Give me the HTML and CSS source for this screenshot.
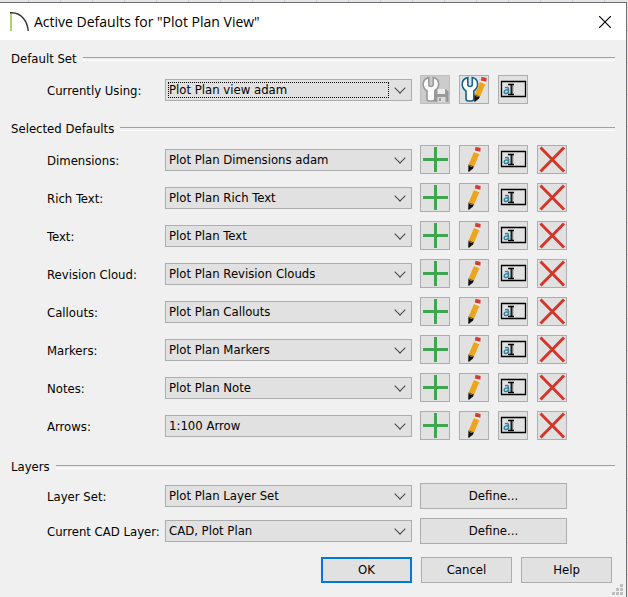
FILE: index.html
```html
<!DOCTYPE html>
<html lang="en">
<head>
<meta charset="utf-8">
<title>Active Defaults for "Plot Plan View"</title>
<link rel="stylesheet" href="styles.css">
</head>
<body>
<svg class="sprite" aria-hidden="true">
  <symbol id="plus" viewBox="0 0 28 27">
    <path d="M14.5 1v25M2 13.5h25" fill="none" stroke="#3fa650" stroke-width="3"/>
  </symbol>
  <symbol id="pencil" viewBox="0 0 28 27">
    <path d="M14 6 19.400 8 14 20.800 8.500 18.800z" fill="#eba51f"/>
    <path d="M14 5.800 14.800 4 20 5.800 19.400 8z" fill="#f4ece0"/>
    <path d="M14.800 4.400 15.600 .8 20.700 2 20.300 5.800z" fill="#d93a31"/>
    <path d="M8.500 18.400 13.800 20.500 13 22.500 8.800 26 8.200 25z" fill="#111"/>
    <path d="M9.200 18.800 10.400 20.300 12.600 20.200" fill="none" stroke="#a08a5a" stroke-width="1"/>
  </symbol>
  <symbol id="rename" viewBox="0 0 28 27">
    <path d="M2.500 5.500h24v15h-24z" fill="none" stroke="#000" stroke-width="1.300"/>
    <path d="M6 11.800q3.500-1.300 3.500 1.600v4.200M9.400 13.800q-4.200 0-4.200 2.200 0 1.600 2 1.600 2.200-.4 2.200-2.400" fill="none" stroke="#32819f" stroke-width="1.500"/>
    <path d="M13.500 9v9" stroke="#777" stroke-width="1.500"/>
    <path d="M9 8.500h6M9 18.500h6M12.200 8.500v10" fill="none" stroke="#000" stroke-width="1.300"/>
  </symbol>
  <symbol id="delete" viewBox="0 0 28 27">
    <path d="M2.500 1.500 26 25.500M26 1.500 2.500 25.500" fill="none" stroke="#d43528" stroke-width="2.900"/>
  </symbol>
  <symbol id="wrench" viewBox="0 0 28 27">
    <path d="M7.800 1.600V8.500Q7.800 10.500 10 10.500T12.300 8.500V1.600Q17.600 3 17.600 8 17.600 12.500 13.800 15V22.500Q13.800 25 11.500 25H8.300Q6 25 6 22.500V15Q2.200 12.500 2.200 8 2.200 3 7.800 1.600z" fill="#fff" stroke="currentColor" stroke-width="1.600"/>
  </symbol>
</svg>

<main class="dialog">
  <header class="titlebar">
    <svg class="logo" viewBox="0 0 20 20" aria-hidden="true">
      <path d="M1 1v18" fill="none" stroke="#b2d26b" stroke-width="2"/>
      <path d="M0 .8Q8.500 0 13.500 6.500 17.700 11.500 18.200 19" fill="none" stroke="#333" stroke-width="1.400"/>
    </svg>
    <h1 class="title">Active Defaults for "Plot Plan View"</h1>
    <button class="close" type="button" aria-label="Close">
      <svg viewBox="0 0 12 12" aria-hidden="true"><path d="M0 0 12 12M12 0 0 12" stroke="#000" stroke-width="1.200"/></svg>
    </button>
  </header>

  <form class="content">
    <fieldset class="group">
      <legend class="heading"><span>Default Set</span></legend>
      <div class="row">
        <label for="using">Currently Using:</label>
        <span class="combo focused"><select id="using"><option>Plot Plan view adam</option></select></span>
        <span class="actions">
          <button type="button" class="icon" disabled aria-label="Save default set">
            <svg viewBox="0 0 28 27"><use href="#wrench"/><path d="M13.500 13h11l3 2.500V26h-14z" fill="#999"/><path d="M16.500 13h7.500v5h-7.500z" fill="#eee"/><path d="M16.500 21h8v5h-8z" fill="#ddd"/><path d="M18 22h2v3h-2z" fill="#999"/></svg>
          </button>
          <button type="button" class="icon" aria-label="Edit default set">
            <svg viewBox="0 0 28 27"><use href="#wrench"/><use href="#pencil" x="6" width="28" height="27"/></svg>
          </button>
          <button type="button" class="icon" aria-label="Rename default set"><svg><use href="#rename"/></svg></button>
        </span>
      </div>
    </fieldset>

    <fieldset class="group defaults">
      <legend class="heading"><span>Selected Defaults</span></legend>
      <div class="row">
        <label for="dimensions">Dimensions:</label>
        <span class="combo"><select id="dimensions"><option>Plot Plan Dimensions adam</option></select></span>
        <span class="actions">
          <button type="button" class="icon" aria-label="Add"><svg><use href="#plus"/></svg></button>
          <button type="button" class="icon" aria-label="Edit"><svg><use href="#pencil"/></svg></button>
          <button type="button" class="icon" aria-label="Rename"><svg><use href="#rename"/></svg></button>
          <button type="button" class="icon" aria-label="Delete"><svg><use href="#delete"/></svg></button>
        </span>
      </div>
      <div class="row">
        <label for="richtext">Rich Text:</label>
        <span class="combo"><select id="richtext"><option>Plot Plan Rich Text</option></select></span>
        <span class="actions">
          <button type="button" class="icon" aria-label="Add"><svg><use href="#plus"/></svg></button>
          <button type="button" class="icon" aria-label="Edit"><svg><use href="#pencil"/></svg></button>
          <button type="button" class="icon" aria-label="Rename"><svg><use href="#rename"/></svg></button>
          <button type="button" class="icon" aria-label="Delete"><svg><use href="#delete"/></svg></button>
        </span>
      </div>
      <div class="row">
        <label for="text">Text:</label>
        <span class="combo"><select id="text"><option>Plot Plan Text</option></select></span>
        <span class="actions">
          <button type="button" class="icon" aria-label="Add"><svg><use href="#plus"/></svg></button>
          <button type="button" class="icon" aria-label="Edit"><svg><use href="#pencil"/></svg></button>
          <button type="button" class="icon" aria-label="Rename"><svg><use href="#rename"/></svg></button>
          <button type="button" class="icon" aria-label="Delete"><svg><use href="#delete"/></svg></button>
        </span>
      </div>
      <div class="row">
        <label for="cloud">Revision Cloud:</label>
        <span class="combo"><select id="cloud"><option>Plot Plan Revision Clouds</option></select></span>
        <span class="actions">
          <button type="button" class="icon" aria-label="Add"><svg><use href="#plus"/></svg></button>
          <button type="button" class="icon" aria-label="Edit"><svg><use href="#pencil"/></svg></button>
          <button type="button" class="icon" aria-label="Rename"><svg><use href="#rename"/></svg></button>
          <button type="button" class="icon" aria-label="Delete"><svg><use href="#delete"/></svg></button>
        </span>
      </div>
      <div class="row">
        <label for="callouts">Callouts:</label>
        <span class="combo"><select id="callouts"><option>Plot Plan Callouts</option></select></span>
        <span class="actions">
          <button type="button" class="icon" aria-label="Add"><svg><use href="#plus"/></svg></button>
          <button type="button" class="icon" aria-label="Edit"><svg><use href="#pencil"/></svg></button>
          <button type="button" class="icon" aria-label="Rename"><svg><use href="#rename"/></svg></button>
          <button type="button" class="icon" aria-label="Delete"><svg><use href="#delete"/></svg></button>
        </span>
      </div>
      <div class="row">
        <label for="markers">Markers:</label>
        <span class="combo"><select id="markers"><option>Plot Plan Markers</option></select></span>
        <span class="actions">
          <button type="button" class="icon" aria-label="Add"><svg><use href="#plus"/></svg></button>
          <button type="button" class="icon" aria-label="Edit"><svg><use href="#pencil"/></svg></button>
          <button type="button" class="icon" aria-label="Rename"><svg><use href="#rename"/></svg></button>
          <button type="button" class="icon" aria-label="Delete"><svg><use href="#delete"/></svg></button>
        </span>
      </div>
      <div class="row">
        <label for="notes">Notes:</label>
        <span class="combo"><select id="notes"><option>Plot Plan Note</option></select></span>
        <span class="actions">
          <button type="button" class="icon" aria-label="Add"><svg><use href="#plus"/></svg></button>
          <button type="button" class="icon" aria-label="Edit"><svg><use href="#pencil"/></svg></button>
          <button type="button" class="icon" aria-label="Rename"><svg><use href="#rename"/></svg></button>
          <button type="button" class="icon" aria-label="Delete"><svg><use href="#delete"/></svg></button>
        </span>
      </div>
      <div class="row">
        <label for="arrows">Arrows:</label>
        <span class="combo"><select id="arrows"><option>1:100 Arrow</option></select></span>
        <span class="actions">
          <button type="button" class="icon" aria-label="Add"><svg><use href="#plus"/></svg></button>
          <button type="button" class="icon" aria-label="Edit"><svg><use href="#pencil"/></svg></button>
          <button type="button" class="icon" aria-label="Rename"><svg><use href="#rename"/></svg></button>
          <button type="button" class="icon" aria-label="Delete"><svg><use href="#delete"/></svg></button>
        </span>
      </div>
    </fieldset>

    <fieldset class="group layers">
      <legend class="heading"><span>Layers</span></legend>
      <div class="row">
        <label for="layerset">Layer Set:</label>
        <span class="combo"><select id="layerset"><option>Plot Plan Layer Set</option></select></span>
        <button type="button" class="push">Define...</button>
      </div>
      <div class="row">
        <label for="cadlayer">Current CAD Layer:</label>
        <span class="combo"><select id="cadlayer"><option>CAD, Plot Plan</option></select></span>
        <button type="button" class="push">Define...</button>
      </div>
    </fieldset>

    <footer class="footer">
      <button type="button" class="push primary">OK</button>
      <button type="button" class="push">Cancel</button>
      <button type="button" class="push">Help</button>
    </footer>
  </form>
  <svg class="grip" viewBox="0 0 11 11" aria-hidden="true"><path d="M8 0h3v3H8zM4 4h3v3H4zM8 4h3v3H8zM0 8h3v3H0zM4 8h3v3H4zM8 8h3v3H8z" fill="#bfbfbf"/></svg>
</main>
</body>
</html>
```
FILE: styles.css
```css
* {
  box-sizing: border-box;
}

body {
  margin: 0;
  padding: 2px 1px 0 0;
  min-height: 100vh;
  display: flex;
  background-color: #e6e6e6;
  background-image:
    repeating-linear-gradient(to right, transparent 0 28px, #c8c8ee 28px 29px, transparent 29px 32px),
    repeating-linear-gradient(to bottom, transparent 0 30px, #c8c8d8 30px 31px, transparent 31px 32px);
  color: #000;
  font: 13px/16px "DejaVu Sans Condensed", "DejaVu Sans", sans-serif;
}

button,
select {
  font: inherit;
  color: inherit;
}

.sprite {
  position: absolute;
  width: 0;
  height: 0;
}

.dialog {
  position: relative;
  flex: 1;
  background: #f0f0f0;
  border: solid #6e6e6e;
  border-width: 1px 1px 0 0;
}

.titlebar {
  display: flex;
  align-items: center;
  height: 37px;
  padding: 0 15px 0 10px;
  background: #fff;
}

.logo {
  width: 20px;
  height: 20px;
}

.title {
  flex: 1;
  margin: 0 0 0 4px;
  font: 14px/20px "Open Sans", "Noto Sans", sans-serif;
}

.close {
  display: flex;
  padding: 0;
  border: 0;
  background: none;
}

.close svg {
  width: 12px;
  height: 12px;
}

.content {
  display: flex;
  flex-direction: column;
  padding: 11px 11px 14px;
}

.group {
  display: flex;
  flex-direction: column;
  gap: 9px;
  min-width: 0;
  margin: 0 0 17px;
  padding: 0;
  border: 0;
}

.defaults {
  margin-bottom: 19px;
}

.layers {
  margin-bottom: 13px;
}

.heading {
  display: flex;
  align-items: center;
  gap: 6px;
  width: 100%;
  margin-bottom: 8px;
  padding: 0;
}

.heading::after {
  content: "";
  flex: 1;
  height: 2px;
  border-top: 1px solid #a0a0a0;
  border-bottom: 1px solid #fff;
}

.row {
  display: grid;
  grid-template-columns: 118px minmax(0, 1fr) 155px;
  align-items: center;
  padding: 0 48px 0 36px;
}

.row label {
  padding-top: 2px;
  white-space: nowrap;
}

.combo {
  position: relative;
  display: flex;
}

.combo select {
  appearance: none;
  width: 100%;
  height: 22px;
  padding: 0 24px 0 3px;
  border: 1px solid #adadad;
  border-radius: 0;
  background: #e1e1e1;
}

.combo::before {
  content: "";
  position: absolute;
  top: 5px;
  right: 8px;
  width: 7px;
  height: 7px;
  border: solid #444;
  border-width: 0 1px 1px 0;
  transform: rotate(45deg);
  pointer-events: none;
}

.focused::after {
  content: "";
  position: absolute;
  inset: 3px 23px 3px 3px;
  border: 1px dotted #000;
  pointer-events: none;
}

.actions {
  display: flex;
  gap: 9px;
  padding-left: 8px;
}

.icon {
  display: flex;
  width: 30px;
  height: 29px;
  padding: 0;
  border: 1px solid #adadad;
  background: #e1e1e1;
  color: #17638a;
}

.icon:disabled {
  border-color: #bfbfbf;
  background: #ccc;
  color: #999;
}

.icon svg {
  width: 28px;
  height: 27px;
}

.push {
  height: 26px;
  padding: 0;
  border: 1px solid #adadad;
  background: #e1e1e1;
}

.row .push {
  margin-left: 8px;
}

.footer {
  display: flex;
  justify-content: flex-end;
  gap: 9px;
  padding-right: 3px;
}

.footer .push {
  width: 91px;
}

.footer .primary {
  border: 2px solid #0078d7;
}

.grip {
  position: absolute;
  right: 3px;
  bottom: 2px;
  width: 11px;
  height: 11px;
}
```
